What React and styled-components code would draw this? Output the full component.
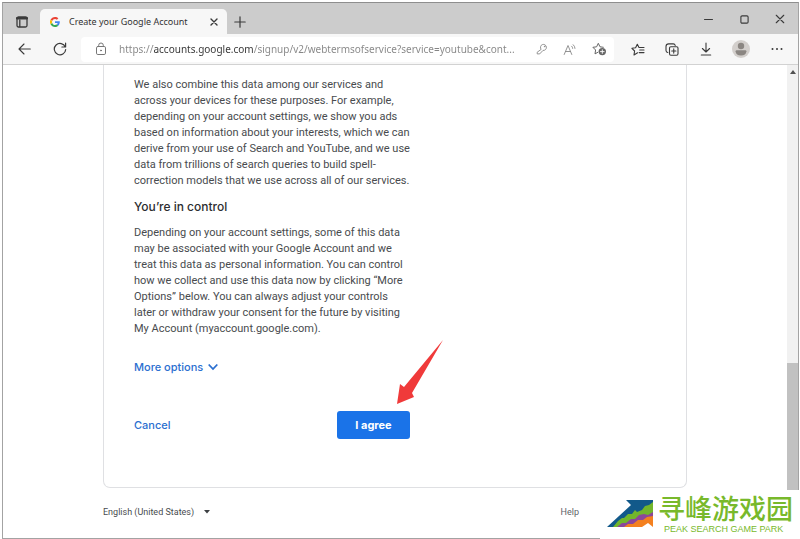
import React from "react";
import styled, { createGlobalStyle, css } from "styled-components";

const Global = createGlobalStyle`
  * { box-sizing: border-box; }
  html, body { margin: 0; background: #fff; }
  body { font-family: Roboto, "Liberation Sans", sans-serif; color: #484b4e; }
  button, input, select { font: inherit; color: inherit; border: 0; padding: 0; margin: 0; background: none; }
  p, h2 { margin: 0; }
  svg { display: block; flex: none; }
`;

const uiFont = css`font-family: "Noto Sans", "Open Sans", sans-serif;`;
const brandFont = css`font-family: Inter, "Liberation Sans", sans-serif;`;

const Page = styled.div`
  position: relative;
  min-height: 100vh;
  padding: 2px 1px 1px 2px;
  display: flex;
`;

const BrowserWindow = styled.div`
  flex: 1;
  min-width: 0;
  display: flex;
  flex-direction: column;
  border: 1px solid #a3a3a3;
  border-top-color: #8e8e8e;
`;

const TabStrip = styled.header`
  display: flex;
  align-items: flex-end;
  height: 31px;
  background: #cccccc;
`;

const IconButton = styled.button`
  display: flex;
  align-items: center;
  justify-content: center;
  width: ${(p) => p.$width || 36}px;
  height: ${(p) => p.$height || 24}px;
  color: ${(p) => p.$color || "#3a3a3a"};
`;

const Tab = styled.div`
  display: flex;
  align-items: center;
  width: 187px;
  height: 25px;
  padding: 0 4px 0 10px;
  background: #f7f7f7;
  border-radius: 5px 5px 0 0;
`;

const TabTitle = styled.span`
  flex: 1;
  margin-left: 9px;
  ${uiFont}
  font-size: 9px;
  line-height: 16px;
  white-space: nowrap;
  color: #333;
`;

const WindowControls = styled.div`
  display: flex;
  margin: 0 0 3px auto;
`;

const Toolbar = styled.nav`
  display: flex;
  align-items: center;
  height: 31px;
  background: #f7f7f7;
  border-bottom: 1px solid #d2d2d2;
  padding: 0 3px 0 4px;
`;

const AddressBar = styled.div`
  flex: 1;
  min-width: 0;
  display: flex;
  align-items: center;
  height: 25px;
  margin: 0 7px 0 4px;
  padding: 0 0 0 6px;
  background: #fff;
  border-radius: 4px;
`;

const AddressInput = styled.input`
  flex: 1;
  min-width: 0;
  height: 20px;
  margin: 0 0 0 4px;
  ${uiFont}
  font-size: 10px;
  line-height: 20px;
  text-overflow: ellipsis;
  color: transparent;
  background: linear-gradient(90deg, #858585 34px, #333 34px, #333 134px, #858585 134px);
  -webkit-background-clip: text;
  background-clip: text;
`;

const Viewport = styled.div`
  flex: 1;
  display: flex;
`;

const Content = styled.div`
  flex: 1;
  min-width: 0;
  padding: 0 20px;
`;

const Card = styled.main`
  max-width: 584px;
  margin: 0 auto;
  padding: 12px 30px 48px;
  border: 1px solid #dfe0e3;
  border-top: 0;
  border-radius: 0 0 7px 7px;
`;

const Column = styled.div`
  max-width: 276px;
`;

const Paragraph = styled.p`
  font-size: 11px;
  line-height: 16px;
  white-space: pre-line;
`;

const Heading = styled.h2`
  ${brandFont}
  font-size: 12px;
  font-weight: 500;
  line-height: 20px;
  margin: 8px 0;
  color: #2c2d30;
`;

const MoreRow = styled.div`
  display: flex;
  margin-top: 20px;
`;

const TextButton = styled.button`
  ${brandFont}
  display: flex;
  align-items: center;
  gap: 5px;
  font-size: 11px;
  font-weight: 500;
  line-height: 20px;
  color: #2b6fd0;
`;

const Actions = styled.div`
  display: flex;
  align-items: center;
  justify-content: space-between;
  margin-top: 34px;
`;

const AgreeWrap = styled.div`
  position: relative;
`;

const AgreeButton = styled.button`
  ${brandFont}
  width: 73px;
  height: 28px;
  font-size: 11px;
  font-weight: 700;
  color: #fff;
  background: #1a73e8;
  border-radius: 3px;
`;

const Arrow = styled.svg`
  position: absolute;
  left: 59px;
  bottom: 34px;
  pointer-events: none;
`;

const Footer = styled.footer`
  display: flex;
  align-items: center;
  max-width: 584px;
  margin: 0 auto;
  padding: 14px 0 16px;
  font-size: 9px;
  line-height: 20px;
`;

const Language = styled.label`
  display: flex;
  align-items: center;
  gap: 9px;
  margin-right: auto;
`;

const LanguageSelect = styled.select`
  appearance: none;
  height: 20px;
`;

const HelpLink = styled.a`
  color: #5f6368;
  text-decoration: none;
  margin-right: 108px;
`;

const Scrollbar = styled.div`
  display: flex;
  flex-direction: column;
  align-items: center;
  width: 11px;
  background: #f1f1f1;
  padding-top: 5px;
`;

const Thumb = styled.div`
  width: 11px;
  margin-top: auto;
  height: 175px;
  background: #c1c1c1;
`;

const Watermark = styled.aside`
  position: absolute;
  right: 0;
  bottom: 0;
  display: flex;
  gap: 5px;
  width: 200px;
  height: 50px;
  padding: 2px 0 0 7px;
  background: #fff;
  color: #78b92b;
`;

const WatermarkName = styled.div`
  font: 500 27px/32px "Noto Sans CJK SC", sans-serif;
  white-space: nowrap;
`;

const WatermarkTagline = styled.div`
  font: 9px/10px "Liberation Sans", sans-serif;
  padding-left: 6px;
  white-space: nowrap;
`;

const PeakLogoBox = styled.div`
  padding-top: 7px;
`;

const line = { fill: "none", stroke: "currentColor", strokeLinecap: "round", strokeLinejoin: "round" };

const TabActionsIcon = () => (
  <svg width="12" height="12" viewBox="0 0 12 12" {...line} strokeWidth="1.3">
    <rect x="1" y="1" width="10" height="10" rx="1.5" />
    <path d="M1.2 2.2h9.6" strokeWidth="2.6" />
    <path d="M3.8 4v6.5" />
  </svg>
);

const GoogleIcon = () => (
  <svg width="10" height="10" viewBox="0 0 48 48">
    <path fill="#EA4335" d="M24 9.5c3.5 0 6.7 1.2 9.2 3.6l6.9-6.9C35.9 2.4 30.5 0 24 0 14.6 0 6.5 5.4 2.6 13.2l8 6.2C12.4 13.7 17.7 9.5 24 9.5z" />
    <path fill="#4285F4" d="M47 24.5c0-1.6-.2-3.1-.4-4.5H24v9h12.9c-.6 3-2.3 5.5-4.8 7.2l7.7 6C44.4 38 47 31.8 47 24.5z" />
    <path fill="#FBBC05" d="M10.5 28.6A14.5 14.5 0 0 1 10.5 19.4l-8-6.2a24 24 0 0 0 0 21.6z" />
    <path fill="#34A853" d="M24 48c6.5 0 11.9-2.1 15.9-5.8l-7.7-6c-2.2 1.5-4.9 2.3-8.2 2.3-6.3 0-11.6-4.2-13.5-9.9l-8 6.2C6.5 42.6 14.6 48 24 48z" />
  </svg>
);

const CloseIcon = ({ size = 8, weight = 1.2 }) => (
  <svg width={size} height={size} viewBox="0 0 8 8" {...line} strokeWidth={weight}>
    <path d="M1 1l6 6M7 1L1 7" />
  </svg>
);

const PlusIcon = () => (
  <svg width="12" height="12" viewBox="0 0 12 12" {...line} strokeWidth="1.2">
    <path d="M6 .8v10.4M.8 6h10.4" />
  </svg>
);

const MinimizeIcon = () => (
  <svg width="9" height="9" viewBox="0 0 9 9" {...line}><path d="M.5 4.5h8" /></svg>
);

const MaximizeIcon = () => (
  <svg width="9" height="9" viewBox="0 0 9 9" {...line} strokeWidth="1.1"><rect x=".9" y=".9" width="7.2" height="7.2" rx="1.2" /></svg>
);

const BackIcon = () => (
  <svg width="13" height="12" viewBox="0 0 13 12" {...line} strokeWidth="1.1"><path d="M12.3 6H1M6 1L1 6l5 5" /></svg>
);

const ReloadIcon = () => (
  <svg width="14" height="14" viewBox="0 0 14 14" {...line} strokeWidth="1.2">
    <path d="M12.3 5A5.7 5.7 0 1 0 12.7 7.5M12.6 1.2V5H8.9" />
  </svg>
);

const LockIcon = () => (
  <svg width="12" height="14" viewBox="0 0 12 14" {...line}>
    <rect x="1.5" y="4.5" width="9" height="8" rx="1.3" />
    <path d="M3.7 4.5V3.3a2.3 2.3 0 0 1 4.6 0v1.2" />
    <circle cx="6" cy="8.5" r=".5" fill="currentColor" />
  </svg>
);

const KeyIcon = () => (
  <svg width="12" height="12" viewBox="0 0 12 12" {...line} strokeWidth=".9">
    <path d="M4.9 6.1A3 3 0 1 1 7 7.4L3.7 10.9H1.2V9.6z" />
    <circle cx="8.5" cy="3.6" r=".3" />
  </svg>
);

const ReadAloudIcon = () => (
  <svg width="14" height="13" viewBox="0 0 14 13" {...line} strokeWidth=".9">
    <path d="M1.2 11.5L5 2.5l3.8 9M2.5 8.5h5M8.7 3.2q1 .9 1 2.2M10.2 1.7q1.8 1.5 1.8 3.7" />
  </svg>
);

const AddFavoriteIcon = () => (
  <svg width="15" height="14" viewBox="0 0 15 14" {...line}>
    <path d="M5.8 10.3L3 11.9l.6-3.9L.9 5.3l3.7-.5L6.3 1.3 8 4.8l3.3.5" />
    <circle cx="10.3" cy="9.6" r="3.7" fill="currentColor" stroke="none" />
    <path d="M10.3 7.8v3.6M8.5 9.6h3.6" stroke="#fff" strokeWidth=".9" />
  </svg>
);

const FavoritesIcon = () => (
  <svg width="14" height="13" viewBox="0 0 14 13" {...line} strokeWidth="1.1">
    <path d="M6.6 9.8L3 12l.6-4L.9 5.3l3.7-.5L6.3 1.3 8 4.5h5M8.7 7H13M8.2 9.6H13" />
  </svg>
);

const CollectionsIcon = () => (
  <svg width="14" height="13" viewBox="0 0 14 13" {...line} strokeWidth="1.1">
    <rect x="4.5" y="3.7" width="8.5" height="8.5" rx="1.4" />
    <path d="M8.75 5.9v4.2M6.7 8h4.2M2.8 9.5A2 2 0 0 1 1 7.6V3.5A2.7 2.7 0 0 1 3.7.9h4.6a2 2 0 0 1 1.9 1.5" />
  </svg>
);

const DownloadIcon = () => (
  <svg width="12" height="14" viewBox="0 0 12 14" {...line} strokeWidth="1.1">
    <path d="M6 1v8.8M2.4 6.5L6 10l3.6-3.5M1.3 13h9.4" />
  </svg>
);

const AvatarIcon = () => (
  <svg width="18" height="18" viewBox="0 0 18 18">
    <circle cx="9" cy="9" r="9" fill="#d3cfcc" />
    <circle cx="9" cy="6" r="3.2" fill="#8b8682" />
    <path d="M3.6 11.2q0-1 1-1h8.8q1 0 1 1-.4 4.4-5.4 4.4t-5.4-4.4z" fill="#8b8682" />
  </svg>
);

const MoreIcon = () => (
  <svg width="12" height="4" viewBox="0 0 12 4" fill="currentColor">
    <circle cx="1.5" cy="2" r="1" /><circle cx="6" cy="2" r="1" /><circle cx="10.5" cy="2" r="1" />
  </svg>
);

const ChevronIcon = () => (
  <svg width="10" height="8" viewBox="0 0 10 8" fill="none" stroke="currentColor" strokeWidth="1.8"><path d="M.7 1.5L5 6l4.3-4.5" /></svg>
);

const PeakLogo = () => (
  <svg width="46" height="30" viewBox="0 0 46 30">
    <path d="M0 28L24 6 19 1h27v27z" fill="#12598a" />
    <path d="M6 28l5-6 4-3 2 0 4-4 4 0 3-4 2 2 5-2 3-4 4-1 4-3v12L22 28z" fill="#72b62c" />
    <path d="M10 28l5-4 4 0 5-4 4 0 4-4 5-1 4 1 5-3v10L24 28z" fill="#8c479a" />
    <path d="M17 28l4-3 5 0 5-4 5 0 4-3 6-1v11z" fill="#f4801f" />
    <path d="M46 28l-5-4-6 4z" fill="#fff" />
  </svg>
);

const dataText = `We also combine this data among our services and
across your devices for these purposes. For example,
depending on your account settings, we show you ads
based on information about your interests, which we can
derive from your use of Search and YouTube, and we use
data from trillions of search queries to build spell-
correction models that we use across all of our services.`;

const controlText = `Depending on your account settings, some of this data
may be associated with your Google Account and we
treat this data as personal information. You can control
how we collect and use this data now by clicking “More
Options” below. You can always adjust your controls
later or withdraw your consent for the future by visiting
My Account (myaccount.google.com).`;

export default function App() {
  return (
    <Page>
      <Global />
      <BrowserWindow>
        <TabStrip>
          <IconButton $width={37} $height={25} aria-label="Tab actions"><TabActionsIcon /></IconButton>
          <Tab>
            <GoogleIcon />
            <TabTitle>Create your Google Account</TabTitle>
            <IconButton $width={18} aria-label="Close tab"><CloseIcon weight={1.4} /></IconButton>
          </Tab>
          <IconButton $width={26} $height={25} aria-label="New tab"><PlusIcon /></IconButton>
          <WindowControls>
            <IconButton aria-label="Minimize"><MinimizeIcon /></IconButton>
            <IconButton aria-label="Maximize"><MaximizeIcon /></IconButton>
            <IconButton aria-label="Close"><CloseIcon size={10} weight={0.9} /></IconButton>
          </WindowControls>
        </TabStrip>
        <Toolbar>
          <IconButton $width={35} aria-label="Back"><BackIcon /></IconButton>
          <IconButton $width={35} aria-label="Reload"><ReloadIcon /></IconButton>
          <AddressBar>
            <IconButton $width={28} $color="#777" aria-label="Site information"><LockIcon /></IconButton>
            <AddressInput
              aria-label="Address"
              defaultValue="https://accounts.google.com/signup/v2/webtermsofservice?service=youtube&cont..."
            />
            <IconButton $width={28} $color="#888" aria-label="Saved password"><KeyIcon /></IconButton>
            <IconButton $width={28} $color="#888" aria-label="Read aloud"><ReadAloudIcon /></IconButton>
            <IconButton $width={30} $color="#666" aria-label="Add to favorites"><AddFavoriteIcon /></IconButton>
          </AddressBar>
          <IconButton $width={34} aria-label="Favorites"><FavoritesIcon /></IconButton>
          <IconButton $width={34} aria-label="Collections"><CollectionsIcon /></IconButton>
          <IconButton $width={34} aria-label="Downloads"><DownloadIcon /></IconButton>
          <IconButton aria-label="Profile"><AvatarIcon /></IconButton>
          <IconButton aria-label="More"><MoreIcon /></IconButton>
        </Toolbar>
        <Viewport>
          <Content>
            <Card>
              <Column>
                <Paragraph>{dataText}</Paragraph>
                <Heading>You’re in control</Heading>
                <Paragraph>{controlText}</Paragraph>
                <MoreRow>
                  <TextButton aria-expanded="false">More options <ChevronIcon /></TextButton>
                </MoreRow>
                <Actions>
                  <TextButton>Cancel</TextButton>
                  <AgreeWrap>
                    <AgreeButton>I agree</AgreeButton>
                    <Arrow width="48" height="65" viewBox="0 0 48 65" aria-hidden="true">
                      <path d="M47 0L16 53l2 4L1 64 4 44l4 3z" fill="#f03a3a" />
                    </Arrow>
                  </AgreeWrap>
                </Actions>
              </Column>
            </Card>
            <Footer>
              <Language>
                <LanguageSelect aria-label="Language"><option>English (United States)</option></LanguageSelect>
                <svg width="6" height="4" viewBox="0 0 6 4"><path d="M0 0h6L3 3.5z" fill="#3c4043" /></svg>
              </Language>
              <HelpLink href="#help">Help</HelpLink>
            </Footer>
          </Content>
          <Scrollbar>
            <svg width="6" height="4" viewBox="0 0 6 4"><path d="M0 4h6L3 0z" fill="#505050" /></svg>
            <Thumb />
          </Scrollbar>
        </Viewport>
      </BrowserWindow>
      <Watermark>
        <PeakLogoBox><PeakLogo /></PeakLogoBox>
        <div>
          <WatermarkName>寻峰游戏园</WatermarkName>
          <WatermarkTagline>PEAK SEARCH GAME PARK</WatermarkTagline>
        </div>
      </Watermark>
    </Page>
  );
}
